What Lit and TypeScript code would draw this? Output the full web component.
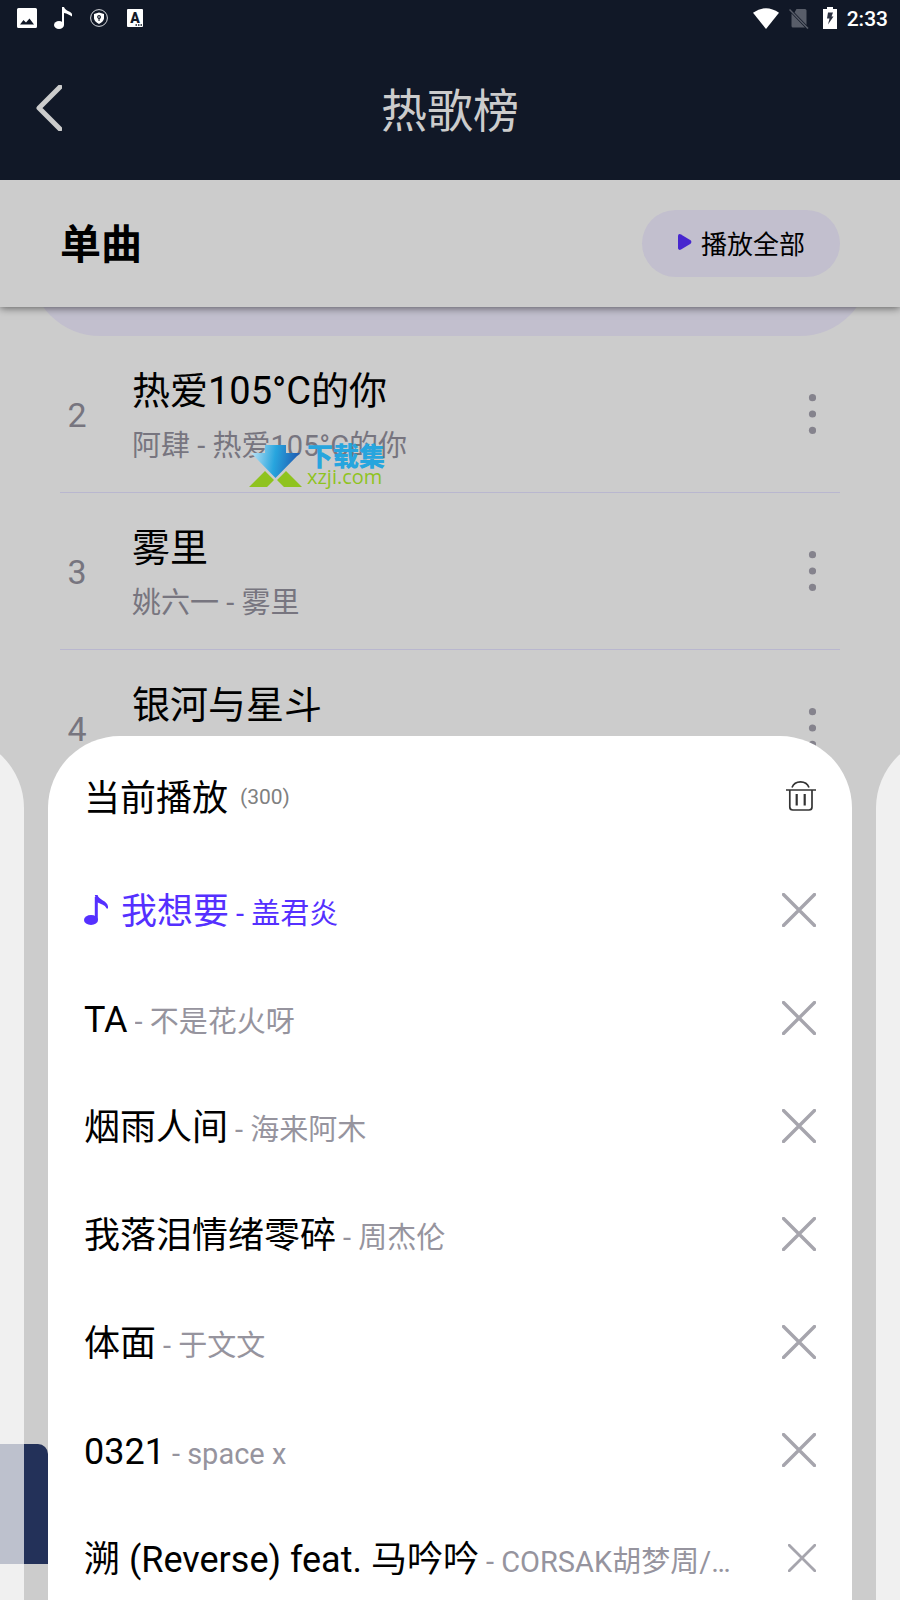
import { LitElement, html, css, svg, nothing } from "lit";
import { customElement, property, state } from "lit/decorators.js";

interface Song {
  title: string;
  artist: string;
}

interface ChartEntry extends Song {
  rank: number;
}

const CHART: ChartEntry[] = [
  { rank: 2, title: "热爱105°C的你", artist: "阿肆 - 热爱105°C的你" },
  { rank: 3, title: "雾里", artist: "姚六一 - 雾里" },
  { rank: 4, title: "银河与星斗", artist: "" },
];

const QUEUE: Song[] = [
  { title: "我想要", artist: "盖君炎" },
  { title: "TA", artist: "不是花火呀" },
  { title: "烟雨人间", artist: "海来阿木" },
  { title: "我落泪情绪零碎", artist: "周杰伦" },
  { title: "体面", artist: "于文文" },
  { title: "0321", artist: "space x" },
  { title: "溯 (Reverse) feat. 马吟吟", artist: "CORSAK胡梦周/马吟吟" },
];

const reset = css`
  * {
    box-sizing: border-box;
  }
  button {
    margin: 0;
    padding: 0;
    border: 0;
    background: none;
    font: inherit;
    color: inherit;
    cursor: pointer;
  }
  svg {
    display: block;
    flex: none;
  }
  h1,
  h2,
  p {
    margin: 0;
    font-weight: 400;
  }
`;

const noteShape = svg`
  <ellipse cx="7" cy="25" rx="7" ry="5" fill="currentColor" />
  <path d="M12.300 25V2" fill="none" stroke="currentColor" stroke-width="3" />
  <path d="M10.800 0H13.600C14.500 5 23.500 5.500 24 11.500V13.500H22.600C21 9.500 16 9 13 7Z" fill="currentColor" />
`;

@customElement("status-bar")
export class StatusBar extends LitElement {
  static styles = [
    reset,
    css`
      :host {
        display: flex;
        justify-content: space-between;
        height: 36px;
        padding: 0 12px 0 17px;
        align-items: center;
        color: #fff;
        font-size: 21px;
        font-weight: 500;
      }
      .group {
        display: flex;
        align-items: center;
      }
      .left {
        gap: 17px;
      }
      .right {
        gap: 10px;
      }
      time {
        padding-top: 2px;
      }
      .letter {
        font: 900 14px Roboto, sans-serif;
      }
    `,
  ];

  render() {
    return html`
      <div class="group left">
        <svg width="20" height="20" viewBox="0 0 20 20" aria-hidden="true">
          <path fill="#fff" fill-rule="evenodd" d="M1.500 0H18.500Q20 0 20 1.500V18.500Q20 20 18.500 20H1.500Q0 20 0 18.500V1.500Q0 0 1.500 0ZM3 16.500H17L12.500 10.500L9 14.500L6.500 12Z" />
        </svg>
        <svg width="18" height="22" viewBox="0 0 18 22" aria-hidden="true">
          <ellipse cx="5" cy="18" rx="5" ry="4" fill="#fff" />
          <path d="M8 18V0H10C11 4 17 4 18 7V9.500C16 8 13 6.500 10 6V18Z" fill="#fff" />
        </svg>
        <svg width="19" height="18" viewBox="-1 0 19 18" aria-hidden="true">
          <circle cx="9" cy="9" r="8.400" fill="none" stroke="#d5d7db" stroke-width="1" />
          <path fill="#fff" fill-rule="evenodd" d="M4 5L9 3.500L14 5V9.500Q13.500 12.900 9 15Q4.500 12.900 4 9.500ZM9 6A2 2 0 0 0 8.500 9.900V12H9.600V9.900A2 2 0 0 0 9 6Z" />
          <circle cx="9" cy="8" r=".8" fill="#fff" />
        </svg>
        <svg width="18" height="18" viewBox="-2 0 18 18" aria-hidden="true">
          <rect width="16" height="18" rx="1" fill="#fff" />
          <text class="letter" x="8" y="14" text-anchor="middle" fill="#111827">A</text>
          <path d="M8.500 16H15" stroke="#111827" stroke-width="1.500" stroke-dasharray="1.500 1" />
        </svg>
      </div>
      <div class="group right">
        <svg width="26" height="21" viewBox="0 0 26 21" aria-hidden="true">
          <path fill="#fff" d="M0 4.800Q13 -4.500 26 4.800L13 21Z" />
        </svg>
        <svg width="20" height="21" viewBox="0 0 20 21" aria-hidden="true">
          <path fill="#585d69" d="M7.500 1H16Q17.500 1 17.500 2.500V17L5.500 4.500ZM2.500 5.500L16 19.500H4Q2.500 19.500 2.500 18Z" />
          <path stroke="#585d69" stroke-width="1.500" d="M.5 1.500L19 20.500" />
        </svg>
        <svg width="18" height="22" viewBox="-4 0 18 22" aria-hidden="true">
          <path fill="#fff" d="M4 0H10V2H14V22H0V2H4Z" />
          <path fill="#2b3040" d="M5 5.500H10L8.500 9.500H10.500L5 17.500L6.500 11.500H4Z" />
        </svg>
        <time>2:33</time>
      </div>
    `;
  }
}

@customElement("chart-row")
export class ChartRow extends LitElement {
  @property({ attribute: false }) entry!: ChartEntry;

  static styles = [
    reset,
    css`
      :host {
        display: grid;
        grid-template-columns: 34px minmax(0, 1fr) 56px;
        column-gap: 38px;
        align-items: center;
        height: 157px;
        margin: 0 60px;
        border-bottom: 1px solid #b9b7cf;
      }
      .rank {
        padding-top: 2px;
        text-align: center;
        font-size: 34px;
        color: #77757f;
      }
      .text {
        padding-top: 4px;
      }
      .title {
        font-size: 38px;
        line-height: 60px;
        color: #000;
      }
      .artist {
        font-size: 29px;
        line-height: 50px;
        height: 50px;
        color: #77757f;
      }
      .more {
        display: grid;
        place-items: center;
        height: 56px;
      }
    `,
  ];

  render() {
    const { rank, title, artist } = this.entry;
    return html`
      <span class="rank">${rank}</span>
      <div class="text">
        <p class="title">${title}</p>
        <p class="artist">${artist}</p>
      </div>
      <button class="more" aria-label="更多">
        <svg width="8" height="40" viewBox="0 0 8 40" fill="#85838d">
          <circle cx="4.500" cy="3.700" r="3.600" />
          <circle cx="4.500" cy="20" r="3.600" />
          <circle cx="4.500" cy="36.300" r="3.600" />
        </svg>
      </button>
    `;
  }
}

@customElement("queue-row")
export class QueueRow extends LitElement {
  @property({ attribute: false }) song!: Song;
  @property({ type: Boolean, reflect: true }) current = false;
  @property({ type: Boolean, reflect: true }) long = false;

  static styles = [
    reset,
    css`
      :host {
        display: flex;
        align-items: center;
        height: 108px;
        color: #000;
      }
      .note {
        margin-right: 13px;
      }
      .label {
        flex: 1;
        min-width: 0;
        display: flex;
        align-items: baseline;
        gap: 7px;
        padding-top: 6px;
        white-space: nowrap;
        line-height: 54px;
      }
      .title {
        flex: none;
        font-size: 36px;
      }
      .artist {
        min-width: 0;
        overflow: hidden;
        text-overflow: ellipsis;
        font-size: 29px;
        color: #96949e;
      }
      :host([current]),
      :host([current]) .artist {
        color: #5530ff;
      }
      .remove {
        display: flex;
        justify-content: flex-end;
        align-items: center;
        width: 72px;
        height: 54px;
      }
    `,
  ];

  private remove() {
    this.dispatchEvent(new CustomEvent("remove-song", { bubbles: true, composed: true, detail: this.song }));
  }

  render() {
    const size = this.long ? 28 : 34;
    return html`
      ${this.current
        ? html`<svg class="note" width="24" height="30" viewBox="0 0 24 30" aria-hidden="true">${noteShape}</svg>`
        : nothing}
      <div class="label">
        <span class="title">${this.song.title}</span>
        <span class="artist">- ${this.song.artist}</span>
      </div>
      <button class="remove" aria-label="移除" @click=${this.remove}>
        <svg width=${size} height=${size} viewBox="0 0 34 34">
          <path d="M1.500 1.500L32.500 32.500M32.500 1.500L1.500 32.500" stroke="#a6a5ad" stroke-width="3.400" stroke-linecap="round" />
        </svg>
      </button>
    `;
  }
}

@customElement("app-root")
export class AppRoot extends LitElement {
  @state() private queue = QUEUE;

  static styles = [
    reset,
    css`
      :host {
        display: block;
        position: relative;
        height: 100vh;
        overflow: hidden;
        background: #ccc;
        font-family: Roboto, "Noto Sans CJK SC", sans-serif;
      }
      .top {
        position: relative;
        z-index: 2;
        height: 180px;
        background: #111827;
      }
      .nav {
        display: grid;
        grid-template-columns: 96px 1fr 96px;
        align-items: center;
        height: 144px;
        color: #ccc;
      }
      .back {
        display: flex;
        padding-left: 36px;
      }
      .heading {
        padding-top: 6px;
        text-align: center;
        font-size: 46px;
        line-height: 68px;
      }
      .section {
        position: relative;
        z-index: 1;
        display: flex;
        align-items: center;
        justify-content: space-between;
        height: 127px;
        padding: 0 60px;
        background: #ccc;
        box-shadow: 0 1px 8px rgba(0, 0, 0, 0.55);
      }
      .section h2 {
        padding-bottom: 5px;
        font-size: 41px;
        font-weight: 700;
      }
      .play-all {
        display: flex;
        align-items: center;
        gap: 9px;
        height: 67px;
        padding: 0 35px 3px 36px;
        border-radius: 34px;
        background: #c2bfce;
        font-size: 26px;
        color: #000;
      }
      .chart-lead {
        height: 156px;
        margin: -127px 30px 0;
        border-radius: 70px;
        background: #c2bfce;
      }
      .watermark {
        position: absolute;
        top: 445px;
        left: 249px;
        display: flex;
        gap: 5px;
        align-items: flex-start;
      }
      .mark-text {
        display: grid;
      }
      .mark-name {
        font-size: 26px;
        line-height: 24px;
        font-weight: 900;
        color: #27a5de;
      }
      .mark-site {
        font-family: "Open Sans", "Noto Sans", sans-serif;
        font-size: 20px;
        line-height: 16px;
        font-weight: 500;
        color: #8fc31f;
      }
      .player {
        position: absolute;
        bottom: 36px;
        left: 0;
        width: 48px;
        height: 120px;
        border-radius: 0 10px 0 0;
        background: #233159;
      }
      .carousel {
        position: absolute;
        inset: auto 0 0;
        height: 54vh;
        display: flex;
        justify-content: center;
        gap: 24px;
      }
      .sheet {
        flex: 0 0 calc(100% - 96px);
        border-radius: 72px 72px 0 0;
        background: #fff;
        overflow: hidden;
        padding: 0 36px;
      }
      .neighbour {
        background: rgba(255, 255, 255, 0.7);
      }
      .sheet-head {
        display: flex;
        align-items: center;
        gap: 12px;
        height: 120px;
      }
      .sheet-head h2 {
        padding-top: 5px;
        font-size: 36px;
        line-height: 54px;
      }
      .count {
        flex: 1;
        padding-top: 1px;
        font-size: 21px;
        color: #808080;
      }
    `,
  ];

  private removeSong(e: CustomEvent<Song>) {
    this.queue = this.queue.filter((song) => song !== e.detail);
  }

  render() {
    return html`
      <header class="top">
        <status-bar></status-bar>
        <nav class="nav">
          <button class="back" aria-label="返回">
            <svg width="26" height="46" viewBox="0 0 26 46">
              <path d="M24 2L3 23L24 44" fill="none" stroke="#ccc" stroke-width="5" stroke-linecap="round" stroke-linejoin="round" />
            </svg>
          </button>
          <h1 class="heading">热歌榜</h1>
        </nav>
      </header>

      <div class="section">
        <h2>单曲</h2>
        <button class="play-all">
          <svg width="14" height="16" viewBox="0 0 14 16" aria-hidden="true">
            <path d="M0 1.500Q.8 -.6 3 .4L12.600 6.300Q14.200 8 12.600 9.700L3 15.600Q.8 16.600 0 14.500Z" fill="#4726cf" />
          </svg>
          播放全部
        </button>
      </div>

      <main>
        <div class="chart-lead"></div>
        ${CHART.map((entry) => html`<chart-row .entry=${entry}></chart-row>`)}
      </main>

      <div class="watermark">
        <svg width="53" height="43" viewBox="0 0 53 43" aria-hidden="true">
          <defs>
            <linearGradient id="drop" x1="0" x2="1" y1="0.2" y2="0.300">
              <stop offset="0" stop-color="#bfe3f5" />
              <stop offset="0.500" stop-color="#27a5de" />
              <stop offset="1" stop-color="#2059b0" />
            </linearGradient>
          </defs>
          <path d="M16 0H37V8H51L26.500 33L2 8H16Z" fill="url(#drop)" />
          <path d="M16 26L25 35L18 42H0ZM37 26L53 42H35L28 35Z" fill="#8fc31f" />
        </svg>
        <div class="mark-text">
          <span class="mark-name">下载集</span>
          <span class="mark-site">xzji.com</span>
        </div>
      </div>

      <div class="player"></div>

      <div class="carousel">
        <div class="sheet neighbour"></div>
        <section class="sheet" @remove-song=${this.removeSong}>
          <div class="sheet-head">
            <h2>当前播放</h2>
            <span class="count">(300)</span>
            <button aria-label="清空列表">
              <svg width="30" height="30" viewBox="0 0 30 30" fill="none" stroke="#333" stroke-width="1.700">
                <path d="M6 6.500C9 -1 20 -1 23 6.500" />
                <path d="M0 9H30" />
                <path d="M3.800 9V26Q3.800 29 6.800 29H23Q26 29 26 26V9" />
                <path d="M10.700 13V24.500M18.700 13V24.500" stroke-width="2.200" />
              </svg>
            </button>
          </div>
          ${this.queue.map(
            (song, i) => html`<queue-row
              .song=${song}
              ?current=${i === 0}
              ?long=${song.title.length > 12}
            ></queue-row>`,
          )}
        </section>
        <div class="sheet neighbour"></div>
      </div>
    `;
  }
}
